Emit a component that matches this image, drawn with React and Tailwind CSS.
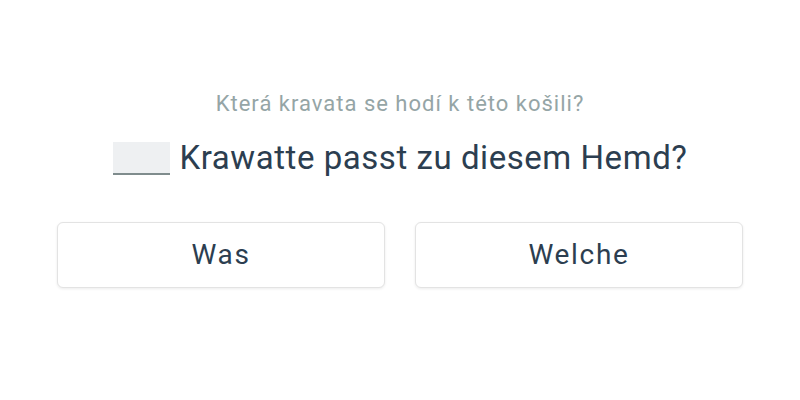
export default function App() {
  return (
    <div className="w-[800px] h-[400px] bg-white flex flex-col items-center" style={{ fontFamily: "Roboto, sans-serif" }}>
      <div className="mt-[91px] text-[22px] leading-[26px] tracking-[1px] text-[#95a5a6]">Která kravata se hodí k této košili?</div>
      <div className="mt-[21px] h-[40px] flex items-center text-[33px] leading-[40px] tracking-[0.55px] text-[#2c3e50]">
        <span className="inline-block w-[57px] h-[33px] bg-[#eef0f2] border-b-2 border-[#7f8c8d] mr-[10px]"></span>
        <span>Krawatte passt zu diesem Hemd?</span>
      </div>
      <div className="mt-[44px] flex gap-[30px]">
        <button className="w-[328px] h-[66px] bg-white rounded-[6px] border border-[#e3e3e3] shadow-[0_1px_3px_rgba(0,0,0,0.08)] text-[28px] tracking-[1.7px] text-[#2c3e50]">Was</button>
        <button className="w-[328px] h-[66px] bg-white rounded-[6px] border border-[#e3e3e3] shadow-[0_1px_3px_rgba(0,0,0,0.08)] text-[28px] tracking-[1.7px] text-[#2c3e50]">Welche</button>
      </div>
    </div>
  );
}
